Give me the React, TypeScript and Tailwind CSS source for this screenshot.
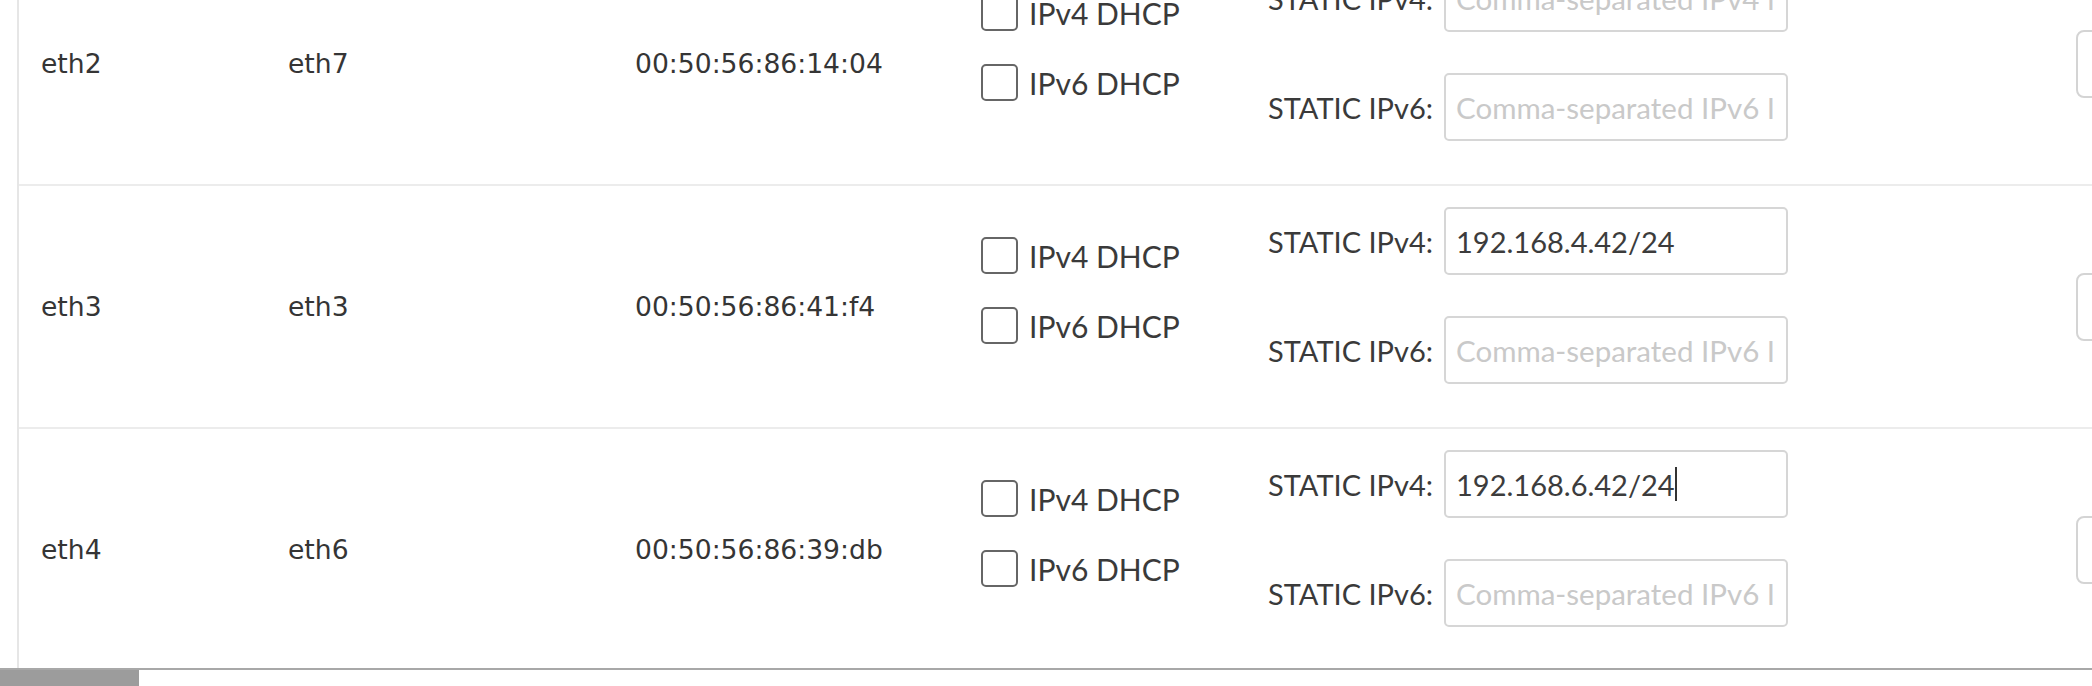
const rows = [
  { name: 'eth2', dev: 'eth7', mac: '00:50:56:86:14:04', v4: '', v6: '', caret: false },
  { name: 'eth3', dev: 'eth3', mac: '00:50:56:86:41:f4', v4: '192.168.4.42/24', v6: '', caret: false },
  { name: 'eth4', dev: 'eth6', mac: '00:50:56:86:39:db', v4: '192.168.6.42/24', v6: '', caret: true },
];

const cellText = "font-['DejaVu_Sans',sans-serif] text-[26.6px] text-[#353535]";
const label = "font-['Lato',sans-serif] text-[29px] leading-none text-[#3a3a3a] whitespace-nowrap";

function Checkbox({ text }: { text: string }) {
  return (
    <label className="flex items-center gap-[11px] h-[37px]">
      <input
        type="checkbox"
        className="appearance-none w-[37px] h-[37px] border-2 border-[#666] rounded-[5px] bg-white"
      />
      <span className={`${label} text-[30px]`}>{text}</span>
    </label>
  );
}

function AddressField({ title, value, placeholder, caret }: { title: string; value: string; placeholder: string; caret?: boolean }) {
  return (
    <div className="flex items-center gap-[11px]">
      <span className={label}>{title}</span>
      <div className="relative">
        <input
          type="text"
          readOnly
          value={value}
          placeholder={placeholder}
          className="w-[344px] h-[68px] px-[10px] border-2 border-[#d6d6d6] rounded-[5px] outline-none font-['Lato',sans-serif] text-[29px] text-[#3c3c3c] placeholder:text-[#c9c9c9] placeholder:text-[29.5px]"
        />
        {caret && (
          <div className="absolute inset-0 flex items-center px-[12px] pointer-events-none font-['Lato',sans-serif] text-[29px]">
            <span className="invisible whitespace-pre">{value}</span>
            <span className="w-[2px] h-[34px] bg-[#333]" />
          </div>
        )}
      </div>
    </div>
  );
}

const App = () => {
  return (
    <div className="w-[2092px] h-[686px] bg-white flex flex-col overflow-hidden">
      <div className="h-[668px] overflow-hidden pl-[17px]">
        <div className="-mt-[59px] border-l-2 border-[#e6e6e6] w-[2200px]">
          {rows.map((r, i) => (
            <div
              key={r.name}
              className={`flex h-[243px] ${i > 0 ? 'border-t-2 border-[#ececec]' : 'pt-[2px]'}`}
            >
              <div className={`w-[247px] pl-[22px] flex items-center ${cellText}`}>{r.name}</div>
              <div className={`w-[347px] pl-[22px] flex items-center ${cellText}`}>{r.dev}</div>
              <div className={`w-[346px] pl-[22px] flex items-center ${cellText}`}>{r.mac}</div>
              <div className="w-[287px] pl-[22px] pt-[51px] flex flex-col gap-[33px]">
                <Checkbox text="IPv4 DHCP" />
                <Checkbox text="IPv6 DHCP" />
              </div>
              <div className="w-[808px] pl-[22px] pt-[21px] flex flex-col gap-[41px]">
                <AddressField title="STATIC IPv4:" value={r.v4} placeholder="Comma-separated IPv4 IPs" caret={r.caret} />
                <AddressField title="STATIC IPv6:" value={r.v6} placeholder="Comma-separated IPv6 IPs" />
              </div>
              <div className="pl-[22px] flex items-center">
                <div className="w-[120px] h-[68px] border-2 border-[#d4d4d4] rounded-[8px]" />
              </div>
            </div>
          ))}
        </div>
      </div>
      <div className="h-[18px] border-t-2 border-[#a8a8a8] bg-white">
        <div className="w-[139px] h-[16px] bg-[#9c9c9c]" />
      </div>
    </div>
  );
};

export default App;
